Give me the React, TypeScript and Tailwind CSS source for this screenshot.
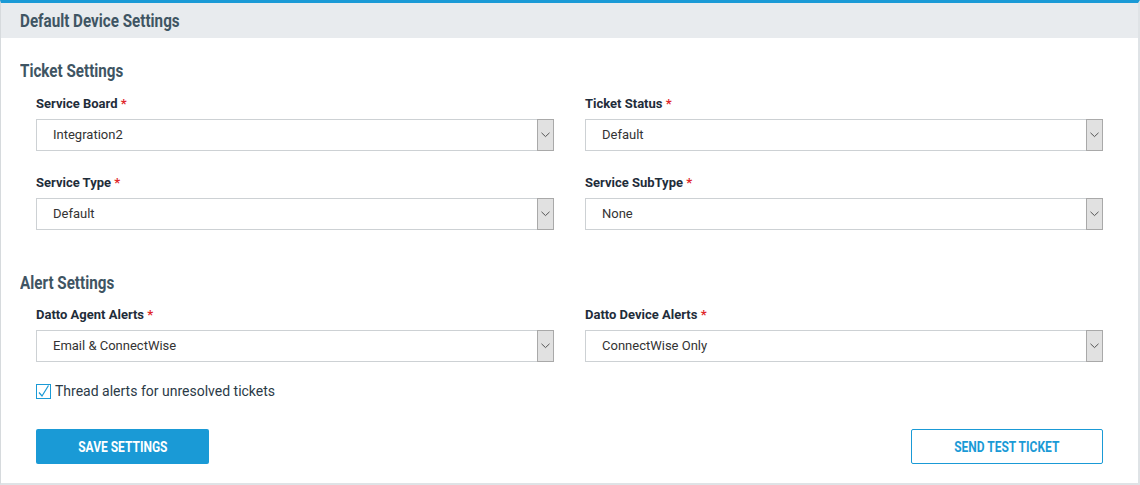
import React from 'react'

const BODY = "font-['Roboto','Liberation_Sans',sans-serif]"
// no condensed DIN available, so squeeze Roboto bold
const HEAD = "font-['Roboto','Liberation_Sans',sans-serif] font-bold inline-block scale-x-[0.8]"

type FieldProps = {
  label: string
  value: string
}

function SelectField({ label, value }: FieldProps) {
  return (
    <div className="flex flex-col">
      <div className={`${BODY} h-[16px] text-[13px] leading-[16px] font-bold text-[#1f2d3a]`}>
        {label} <span className="text-[#e0262b]">*</span>
      </div>
      <div className="mt-[7px] flex h-[32px] items-stretch border border-[#cdd1d4] bg-white">
        <div className={`${BODY} flex flex-1 items-center pl-[16px] text-[13px] text-[#333]`}>
          {value}
        </div>
        <div className="-m-px flex w-[17px] items-center justify-center border border-[#a9a9a9] bg-[#e1e1e1]">
          <svg width="9" height="6" viewBox="0 0 9 6" fill="none">
            <path d="M0.5 0.8 L4.5 4.6 L8.5 0.8" stroke="#555" strokeWidth="1" />
          </svg>
        </div>
      </div>
    </div>
  )
}

function SectionTitle({ children }: { children: React.ReactNode }) {
  return (
    <h2 className="h-[22px] text-[19px] leading-[22px] text-[#3f5563]">
      <span className={`${HEAD} origin-left`}>{children}</span>
    </h2>
  )
}

export default function App() {
  return (
    <div className="h-[485px] w-[1140px] bg-white">
      <div className="flex h-full flex-col border-t-[3px] border-r-2 border-b-2 border-l border-t-[#1a9ad6] border-r-[#dfe3e6] border-b-[#dfe3e6] border-l-[#d6dadd]">
        <div className="flex h-[35px] items-center bg-[#e8ebee] px-[19px]">
          <h1 className="text-[19px] text-[#3f5563]">
            <span className={`${HEAD} origin-left`}>Default Device Settings</span>
          </h1>
        </div>

        <div className="px-[19px] pt-[21px]">
          <SectionTitle>Ticket Settings</SectionTitle>
          <div className="mt-[15px] grid grid-cols-2 gap-x-[31px] gap-y-[24px] px-[16px]">
            <SelectField label="Service Board" value="Integration2" />
            <SelectField label="Ticket Status" value="Default" />
            <SelectField label="Service Type" value="Default" />
            <SelectField label="Service SubType" value="None" />
          </div>

          <div className="mt-[41px]">
            <SectionTitle>Alert Settings</SectionTitle>
          </div>
          <div className="mt-[14px] grid grid-cols-2 gap-x-[31px] px-[16px]">
            <SelectField label="Datto Agent Alerts" value="Email & ConnectWise" />
            <SelectField label="Datto Device Alerts" value="ConnectWise Only" />
          </div>

          <label className="mt-[19px] flex h-[20px] items-center px-[16px]">
            <span className="flex h-[15px] w-[15px] items-center justify-center border border-[#1a9ad6] bg-white">
              <svg width="13" height="13" viewBox="0 0 13 13" fill="none">
                <path d="M2 7.5 L5 11 L11.5 0.5" stroke="#1a9ad6" strokeWidth="1.2" />
              </svg>
            </span>
            <span className={`${BODY} ml-[4px] text-[14px] text-[#2b3a47]`}>
              Thread alerts for unresolved tickets
            </span>
          </label>

          <div className="mt-[28px] flex items-center justify-between px-[16px]">
            <button className="h-[35px] w-[173px] rounded-[2px] bg-[#1a9ad6] text-[15px] text-white">
              <span className={HEAD}>SAVE SETTINGS</span>
            </button>
            <button className="h-[35px] w-[192px] rounded-[2px] border border-[#1a9ad6] bg-white text-[15px] text-[#1a9ad6]">
              <span className={HEAD}>SEND TEST TICKET</span>
            </button>
          </div>
        </div>
      </div>
    </div>
  )
}
